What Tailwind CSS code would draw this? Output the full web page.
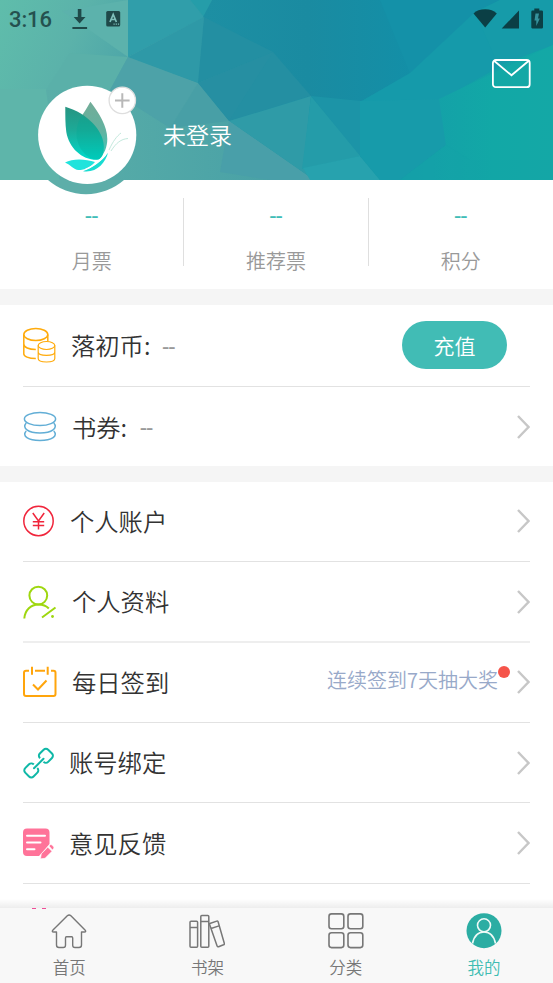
<!DOCTYPE html>
<html lang="zh-CN">
<head>
<meta charset="utf-8">
<meta name="viewport" content="width=device-width, initial-scale=1">
<title>我的</title>
<script src="https://cdn.jsdelivr.net/npm/@tailwindcss/browser@4"></script>
</head>
<body class="bg-white">
<div class="relative flex h-[983px] w-[553px] flex-col overflow-hidden bg-white font-['Noto_Sans_CJK_SC',sans-serif] font-[350] text-[#333]">

  <header class="relative h-[180px] shrink-0 bg-[#1a9aa8]">
    <!-- faceted background -->
    <svg class="absolute inset-0" width="553" height="180" viewBox="0 0 553 180" preserveAspectRatio="none">
      <defs>
        <linearGradient id="base" x1="0" y1="0" x2="1" y2="0.15">
          <stop offset="0" stop-color="#5fbdab"/><stop offset=".16" stop-color="#5bb2aa"/><stop offset=".3" stop-color="#4ba4a8"/><stop offset=".45" stop-color="#2a94a4"/><stop offset=".6" stop-color="#188fa5"/><stop offset=".8" stop-color="#159aa9"/><stop offset="1" stop-color="#12a6a6"/>
        </linearGradient>
        <linearGradient id="mid" x1="0" y1="0" x2="1" y2="0"><stop offset="0" stop-color="#5aaea8"/><stop offset="1" stop-color="#469fa6"/></linearGradient>
        <linearGradient id="deep" x1="0" y1="0" x2="1" y2="0"><stop offset="0" stop-color="#1d8fa3"/><stop offset=".5" stop-color="#1a8ba1"/><stop offset="1" stop-color="#138fa7"/></linearGradient>
        <linearGradient id="green" x1="0" y1="0" x2="1" y2="0"><stop offset="0" stop-color="#159da9"/><stop offset=".6" stop-color="#12a8a6"/><stop offset="1" stop-color="#14a8a6"/></linearGradient>
      </defs>
      <rect width="553" height="180" fill="url(#base)"/>
      <polygon points="62,11 128,0 128,57" fill="#5cb2ac"/>
      <polygon points="70,53 128,57 110,90 46,90" fill="#5ab0a9"/>
      <polygon points="0,89 46,89 50,120 60,180 0,180" fill="#5eb5aa"/>
      <polygon points="128,57 198,83 229,121 314,180 60,180 46,90 110,90" fill="url(#mid)"/>
      <polygon points="128,57 198,83 170,128 110,90" fill="#4da2a8"/>
      <polygon points="198,83 229,121 170,128" fill="#489fa6"/>
      <polygon points="128,0 190,0 204,17 128,57" fill="#309eaa"/>
      <polygon points="204,17 198,83 128,57" fill="#2e99a7"/>
      <polygon points="190,0 212,0 204,17" fill="#259da9"/>
      <polygon points="212,0 381,0 412,73 360,102 310,97 272,53 203,17" fill="url(#deep)"/>
      <polygon points="204,17 273,52 198,83" fill="#238fa2"/>
      <polygon points="198,83 273,52 280,105 229,121" fill="#268fa2"/>
      <polygon points="273,52 311,96 229,121" fill="#248fa2"/>
      <polygon points="229,121 311,96 303,168 314,180" fill="#2f9ba7"/>
      <polygon points="229,121 314,180 270,180 220,172" fill="#499fa9"/>
      <polygon points="311,96 361,156 302,169" fill="#249ca9"/>
      <polygon points="303,168 360,156 380,180 310,180" fill="#27a2ae"/>
      <polygon points="311,96 361,101 361,157" fill="#1c94a7"/>
      <polygon points="380,0 500,0 475,13 410,74" fill="#1491a8"/>
      <polygon points="475,12 500,0 553,0 553,45 498,66" fill="#169ba9"/>
      <polygon points="475,12 499,67 440,100 360,102 410,73" fill="#159aaa"/>
      <polygon points="360,101 440,99 446,145 400,180 380,180 360,156" fill="#179baa"/>
      <polygon points="439,99 553,45 553,180 400,180 446,145" fill="url(#green)"/>
      <polygon points="446,145 470,160 553,160 553,180 400,180" fill="#15a2a7" fill-opacity=".4"/>
    </svg>

    <div class="relative flex h-[37px] items-center justify-between pr-[10px] pl-[9px]">
      <div class="flex items-center">
        <span class="w-[63px] pt-[2px] font-[Roboto,sans-serif] text-[22px] leading-none font-medium tracking-[-0.1px] text-[#25514f]">3:16</span>
        <svg width="16" height="22" viewBox="0 0 16 22" class="text-[#1f4949]"><path d="M5.800 1h3.600v8h4.100L7.600 15.600 1.700 9h4.100z" fill="currentColor"/><path d="M.4 19h14.700v2H.4z" fill="currentColor"/></svg>
        <svg width="15" height="16" viewBox="0 0 15 16" class="ml-[18px]"><rect x=".2" y="0" width="14" height="15.500" rx="1.500" fill="#1f4949"/><path d="M4 11 7.200 3.500 10.400 11M5.200 8.500h4" fill="none" stroke="#7fc0bb" stroke-width="1.700"/><path d="M7.500 13.200h1.200m1 0h1.200m1 0h1.200" stroke="#7fc0bb" stroke-width="1.200"/></svg>
      </div>
      <div class="flex items-center text-[#0b3f45]">
        <svg width="24" height="20" viewBox="0 0 24 20"><path d="M.5 4.500C3.500 1.500 7 .2 12.200.2s8.300 1.300 11.600 4.300L12.200 18.500z" fill="currentColor"/></svg>
        <svg width="18" height="20" viewBox="0 0 18 20" class="ml-[4px]"><path d="M18 1.500V19.500H.7z" fill="currentColor"/></svg>
        <svg width="12" height="22" viewBox="0 0 12 22" class="ml-[12px]"><path d="M3.300 .5h5v2h2.500a1.200 1.200 0 0 1 1.200 1.200v15.500a1.200 1.200 0 0 1-1.200 1.200h-9.500A1.200 1.200 0 0 1 .3 19.200V3.700A1.200 1.200 0 0 1 1.500 2.500h1.800z" fill="currentColor"/><path d="M4.500 5.500H8L7 10.500h1.800L5.300 18v-5.500H3.500z" fill="#36929c"/></svg>
      </div>
    </div>

    <div class="relative flex justify-end pt-[21px] pr-[22px]">
      <svg width="39" height="31" viewBox="0 0 39 31" fill="none" stroke="#fff" stroke-width="1.800"><rect x=".9" y="2" width="36.800" height="27.200" rx="3"/><path d="m2 2.800 17.500 14.500L36.800 2.800"/></svg>
    </div>

    <div class="relative pt-[25px] pl-[163px]">
      <h1 class="text-[23px] leading-[40px] text-white">未登录</h1>
    </div>
  </header>

  <!-- avatar, overlapping the header and the counters -->
  <div class="absolute top-[77px] left-[30px] z-10 size-[116px]">
    <svg width="116" height="118" viewBox="0 0 116 118">
      <defs>
        <linearGradient id="w1" x1="0" y1="0" x2="0" y2="1"><stop offset="0" stop-color="#279481"/><stop offset=".45" stop-color="#1cab98"/><stop offset="1" stop-color="#00dbcc"/></linearGradient>
        <linearGradient id="w2" x1="0" y1="0" x2="0" y2="1"><stop offset="0" stop-color="#73ac98"/><stop offset=".5" stop-color="#62b2a0"/><stop offset="1" stop-color="#38cabb"/></linearGradient>
      </defs>
      <path d="M18 103h76A58 58 0 0 1 18 103z" fill="#5daea9"/>
      <circle cx="57.200" cy="57.900" r="49.100" fill="#fff"/>
      <path d="M60.400 24.800C69 36 77.300 49 77.300 62c0 8-3 15-8 20C56 80 46.500 68 46.500 54 47 43 54 37 60.400 24.800z" fill="url(#w2)"/>
      <path d="M35.300 29.800C58 36.500 73.600 54 73.800 69.500c0 7-2 13-7 13.300C52 83 39 71 36.300 55 35.200 47 35.300 38 35.300 29.800z" fill="url(#w1)"/>
      <path d="M51.500 38.500C66 47 73.600 58 73.800 69.500c0 7-2 13-7 13.300C56 82 46.500 70 46.500 56 46.800 48 49 43.500 51.500 38.500z" fill="#00a994" fill-opacity=".3"/>
      <path d="M35 85.500c8-4.500 21-3.500 30-.5-5 6-10 8-16.500 8-5-.3-8-5.500-13.500-7.500z" fill="#20e3dc"/>
      <path d="M53 94.300C63 91 72 84 78 75.800 75.500 86 66 96.500 53 94.300z" fill="#19dcd2"/>
      <path d="M55 92.500C64 89 70 84 75.500 78" fill="none" stroke="#fff" stroke-width="1.200"/>
      <path d="M79 73C83 64 87 59 91 56M81 74C86 66 91 62 98 61.500" fill="none" stroke="#c3e9dd" stroke-width="1"/>
      <circle cx="92.300" cy="23.400" r="13.200" fill="#fff" stroke="#dedede" stroke-width="1.300"/>
      <path d="M85 23.500h14.600M92.300 16.200v14.600" stroke="#b8b8b8" stroke-width="2"/>
    </svg>
  </div>

  <section class="grid h-[109px] shrink-0 grid-cols-3 pt-[18px] text-center">
    <div class="h-[68px] border-r border-[#dfdfdf]">
      <p class="font-[Roboto,sans-serif] text-[23px] leading-[38px] font-normal text-[#3fbdb7]">--</p>
      <p class="mt-[10px] text-[20px] leading-[30px] text-[#999]">月票</p>
    </div>
    <div class="h-[68px] border-r border-[#dfdfdf]">
      <p class="font-[Roboto,sans-serif] text-[23px] leading-[38px] font-normal text-[#3fbdb7]">--</p>
      <p class="mt-[10px] text-[20px] leading-[30px] text-[#999]">推荐票</p>
    </div>
    <div class="h-[68px]">
      <p class="font-[Roboto,sans-serif] text-[23px] leading-[38px] font-normal text-[#3fbdb7]">--</p>
      <p class="mt-[10px] text-[20px] leading-[30px] text-[#999]">积分</p>
    </div>
  </section>

  <section class="shrink-0 border-t-[16px] border-[#f5f5f5] px-[23px]">
    <div class="flex h-[82px] items-center border-b border-[#e2e2e2] pb-px">
      <svg width="34" height="36" viewBox="0 0 34 36" fill="none" stroke="#ffab0c" stroke-width="1.500" class="shrink-0">
        <ellipse cx="12.800" cy="7.500" rx="12" ry="6"/>
        <path d="M.8 7.500v19.500c0 2.200 4.500 4.600 12 4.600M.8 17c0 3.300 5 5.600 12 5.600M24.800 7.500v6.500"/>
        <ellipse cx="23.500" cy="18.500" rx="8.300" ry="4" stroke-width="1.200"/>
        <path d="M15.200 18.500v13c0 2.200 3.600 3.500 8.300 3.500s8.300-1.300 8.300-3.500V18.500M15.200 25c0 2 3.600 3.400 8.300 3.400s8.300-1.400 8.300-3.400" stroke-width="1.200"/>
      </svg>
      <span class="ml-[14px] pt-px text-[24.300px] leading-none">落初币:</span>
      <span class="ml-[12px] pt-[4px] font-[Roboto,sans-serif] text-[23px] leading-none font-normal text-[#999]">--</span>
      <button class="mr-[23px] ml-auto h-[48px] w-[105px] rounded-full bg-[#41bcb5] text-[21px] leading-none text-white">充值</button>
    </div>
    <div class="flex h-[79px] items-center">
      <svg width="34" height="31" viewBox="0 0 34 31" fill="none" stroke="#62aed6" stroke-width="1.500" class="shrink-0">
        <ellipse cx="17" cy="8" rx="15.600" ry="6.500"/>
        <path d="M3.200 12C-1.300 17 5 22 17 22s18.300-5 13.800-10M3.200 20C-1.300 25 5 29.600 17 29.600S35.300 25 30.800 20"/>
      </svg>
      <span class="ml-[15px] pt-px text-[24.300px] leading-none">书券:</span>
      <span class="ml-[13px] pt-[3px] font-[Roboto,sans-serif] text-[23px] leading-none font-normal text-[#999]">--</span>
      <svg width="13" height="24" viewBox="0 0 13 24" class="ml-auto" fill="none" stroke="#c7c7c7" stroke-width="2.400"><path d="M1 1l10.500 11L1 23"/></svg>
    </div>
  </section>

  <section class="shrink-0 border-t-[16px] border-[#f5f5f5] px-[23px]">
    <div class="flex h-[80px] items-center border-b border-[#e2e2e2] pb-px">
      <svg width="31" height="32" viewBox="0 0 31 32" fill="none" stroke="#f0253b" stroke-width="1.500" class="shrink-0"><circle cx="15.500" cy="16" r="14.700"/><path d="M9.800 8l5.700 8 5.700-8M15.500 16v8.500M9.800 16.800h11.400M9.800 20.500h11.400"/></svg>
      <span class="ml-[16px] pt-px text-[24.300px] leading-none">个人账户</span>
      <svg width="13" height="24" viewBox="0 0 13 24" class="ml-auto" fill="none" stroke="#c7c7c7" stroke-width="2.400"><path d="M1 1l10.500 11L1 23"/></svg>
    </div>
    <div class="flex h-[81px] items-center border-b-2 border-[#eeeeee]">
      <svg width="34" height="34" viewBox="0 0 34 34" fill="none" stroke="#9ed70f" stroke-width="2" class="shrink-0"><circle cx="15.300" cy="10.600" r="8.900"/><path d="M1.300 33.500C2 25 8 19.500 15.300 19.500c4.500 0 8 1.300 10.500 4M32.500 22.500 19 32.500"/><circle cx="29.500" cy="31.500" r="1.400" fill="#9ed70f" stroke="none"/></svg>
      <span class="ml-[15px] text-[24.300px] leading-none">个人资料</span>
      <svg width="13" height="24" viewBox="0 0 13 24" class="ml-auto" fill="none" stroke="#c7c7c7" stroke-width="2.400"><path d="M1 1l10.500 11L1 23"/></svg>
    </div>
    <div class="flex h-[80px] items-center border-b border-[#e2e2e2] pb-px">
      <svg width="34" height="32" viewBox="0 0 34 32" fill="none" stroke="#ffa50c" stroke-width="2" class="shrink-0"><path d="M6 4.800H3a2 2 0 0 0-2 2V28a2 2 0 0 0 2 2h27.500a2 2 0 0 0 2-2V6.800a2 2 0 0 0-2-2H28M12 4.800h10M9 .8v8M24.700.8v8M10 18.500l5 5 8.500-9"/></svg>
      <span class="ml-[15px] text-[24.300px] leading-none">每日签到</span>
      <span class="relative mr-[19px] ml-auto text-[20px] leading-[30px] text-[#98a9c9]"><span class="relative -top-[2px]">连续签到7天抽大奖</span><i class="absolute top-[-1px] -right-[12px] size-[12px] rounded-full bg-[#f5544a]"></i></span>
      <svg width="13" height="24" viewBox="0 0 13 24" fill="none" stroke="#c7c7c7" stroke-width="2.400"><path d="M1 1l10.500 11L1 23"/></svg>
    </div>
    <div class="flex h-[80px] items-center border-b border-[#e2e2e2]">
      <svg width="31" height="32" viewBox="0 0 31 32" fill="none" stroke="#0fb8a7" stroke-width="2" stroke-linecap="round" class="shrink-0"><rect x="17" y="2.900" width="11.800" height="11.800" rx="3.200" transform="rotate(45 22.900 8.800)"/><rect x="2.400" y="17.500" width="11.800" height="11.800" rx="3.200" transform="rotate(45 8.300 23.400)"/><path d="M10.500 21.300 20.500 11.200" stroke="#fff" stroke-width="5"/><path d="M11 21.300 20.500 11.700"/></svg>
      <span class="ml-[15px] text-[24.300px] leading-none">账号绑定</span>
      <svg width="13" height="24" viewBox="0 0 13 24" class="ml-auto" fill="none" stroke="#c7c7c7" stroke-width="2.400"><path d="M1 1l10.500 11L1 23"/></svg>
    </div>
    <div class="flex h-[81px] items-center border-b border-[#e2e2e2]">
      <svg width="31" height="31" viewBox="0 0 31 31" class="shrink-0"><path d="M4 .5h18.500a4 4 0 0 1 4 4V16L16 28H4a4 4 0 0 1-4-4V4.500a4 4 0 0 1 4-4z" fill="#ff7399"/><path d="M4 7.800h18M4 14.500h13.500M4 21.200h7.500" stroke="#fff" stroke-width="2" stroke-linecap="round"/><path d="M17.500 30.800l.8-5 6.500-6.500 4.200 4-7 7zM26 18l1-1c.6-.5 1.300-.5 2 .1l1.500 1.700c.5.6.5 1.200 0 1.800L29.500 22z" fill="#ff7399" stroke="#fff" stroke-width=".6"/></svg>
      <span class="ml-[15px] pt-px text-[24.300px] leading-none">意见反馈</span>
      <svg width="13" height="24" viewBox="0 0 13 24" class="ml-auto" fill="none" stroke="#c7c7c7" stroke-width="2.400"><path d="M1 1l10.500 11L1 23"/></svg>
    </div>
    <div class="relative z-30 h-[25px] pt-[23px]">
      <svg width="31" height="2" viewBox="0 0 31 2"><path d="M9 1.500h4M19 1.500h4" stroke="#ef4f98" stroke-width="1"/></svg>
    </div>
  </section>

  <nav class="absolute inset-x-0 bottom-0 z-20 grid h-[75px] grid-cols-4 bg-[#f8f8f8] text-[16.500px] leading-[24px] text-[#777] before:absolute before:inset-x-0 before:-top-[9px] before:h-[9px] before:bg-gradient-to-b before:from-black/0 before:to-black/7">
    <a class="flex flex-col items-center pt-[4px]">
      <svg width="36" height="38" viewBox="0 0 36 38" fill="none" stroke="#777" stroke-width="1.400" stroke-linejoin="round"><path d="M16.300 3.800c1.200-1 2.500-1 3.600 0L34 18c1.200 1.300.8 2-.7 2h-2.800v13c0 1.800-1 2.500-2.500 2.500h-4c-1.500 0-2.300-.7-2.300-2.300V26c0-.8-.3-1.300-1-1.300h-5.200c-.7 0-1 .5-1 1.300v7.200c0 1.600-.8 2.300-2.300 2.300H8c-1.500 0-2.500-.7-2.500-2.500V20H2.700c-1.500 0-1.900-.7-.7-2z"/></svg>
      <span class="mt-[5px]">首页</span>
    </a>
    <a class="flex flex-col items-center pt-[4px]">
      <svg width="36" height="38" viewBox="0 0 36 38" fill="none" stroke="#777" stroke-width="1.500" stroke-linejoin="round"><rect x="1" y="9.300" width="7.600" height="25.900" rx="1"/><rect x="11.800" y="3.500" width="8" height="31.700" rx="1"/><path d="M1 15.500h7.600M11.800 9.500h8M20.800 11.500l7-2.400c.7-.2 1.100 0 1.300.7l6.200 21.500c.2.800-.1 1.200-.8 1.500l-4.900 1.900c-.8.300-1.300 0-1.500-.8l-7.500-21.500c-.2-.5-.2-.7.200-.9zM22 16.500l8-2.600"/></svg>
      <span class="mt-[5px]">书架</span>
    </a>
    <a class="flex flex-col items-center pt-[4px]">
      <svg width="36" height="38" viewBox="0 0 36 38" fill="none" stroke="#777" stroke-width="1.600"><rect x="1" y="1.900" width="14.800" height="14.800" rx="2.500"/><rect x="20" y="1.900" width="14.800" height="14.800" rx="2.500"/><rect x="1" y="20.800" width="14.800" height="14.800" rx="2.500"/><rect x="20" y="20.800" width="14.800" height="14.800" rx="2.500"/></svg>
      <span class="mt-[5px]">分类</span>
    </a>
    <a class="flex flex-col items-center pt-[4px] text-[#3fbdb3]">
      <svg width="36" height="38" viewBox="0 0 36 38" fill="none" stroke="#eefaf7" stroke-width="1.600"><circle cx="18" cy="18.700" r="17.500" fill="#2bada3" stroke="none"/><circle cx="18" cy="13.300" r="6.500"/><path d="M6.500 31.500C8 24 12 20 18 20s10 4 11.500 11.500"/></svg>
      <span class="mt-[5px]">我的</span>
    </a>
  </nav>
</div>
</body>
</html>
